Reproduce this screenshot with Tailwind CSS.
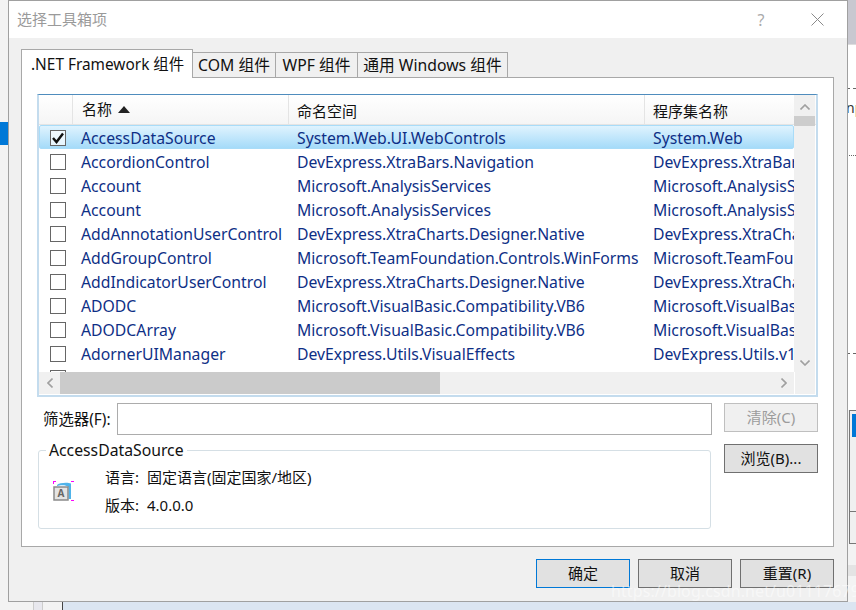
<!DOCTYPE html>
<html lang="zh-CN">
<head>
  <meta charset="UTF-8">
  <title>选择工具箱项</title>
  <script src="https://cdn.jsdelivr.net/npm/@tailwindcss/browser@4"></script>
</head>
<body class="bg-[#f3f3f3] font-['Noto_Sans','Noto_Sans_CJK_SC',sans-serif] text-[15.75px] leading-[24px] text-[#111]">
  <div class="relative w-[856px] h-[610px] overflow-hidden">
    <!-- behind the dialog -->
    <div class="absolute left-0 top-[122px] w-[8px] h-[23px] bg-[#0078d7]"></div>
    <div class="absolute left-[63px] right-0 top-[602px] h-[8px] bg-[#dbe5f1]"></div>
    <div class="absolute left-[62px] top-[602px] w-[1px] h-[8px] bg-[#444]"></div>
    <div class="absolute left-[33px] top-[602px] w-[10px] h-[8px] bg-[#e8e8ee] border-x border-[#ccc]"></div>
    <div class="absolute left-[847px] top-0 w-[9px] h-[44px] bg-[#c8c8d0]"></div>
    <div class="absolute left-[847px] top-[44px] w-[9px] h-[181px] bg-white border-t border-[#ddd] overflow-hidden">
      <div class="mt-[43px] border-t border-dashed border-[#666]"></div>
      <div class="mt-[12px] text-[14px] leading-[14px] text-[#333] -ml-[1px]">np</div>
      <div class="mt-[40px] border-t border-dotted border-[#666]"></div>
    </div>
    <div class="absolute left-[847px] top-[225px] w-[9px] h-[185px] bg-white">
      <div class="mt-[128px] border-t border-dashed border-[#666]"></div>
    </div>
    <div class="absolute left-[849px] top-[410px] w-[7px] h-[134px] bg-[#f0f0f0] border-l border-y border-[#777]">
      <div class="mt-[3px] ml-[2px] h-[23px] bg-[#0078d7]"></div>
      <div class="mt-[74px] border-t border-[#777]"></div>
    </div>
    <div class="absolute left-[847px] top-[565px] w-[9px] h-[11px] bg-[#e4e4e4]"></div>

    <!-- dialog -->
    <div class="absolute left-[8px] top-0 w-[840px] h-[602px] flex flex-col bg-[#f0f0f0] border border-[#a0a0a0]">
      <div class="flex items-center justify-between h-[37px] bg-white shrink-0">
        <div class="pl-[8px] -mt-[2px] text-[15px] text-[#9a9a9a]">选择工具箱项</div>
        <div class="flex items-center">
          <span class="w-[20px] text-center text-[16px] text-[#aaa]">?</span>
          <svg class="ml-[40px] mr-[23px]" width="13" height="13" viewBox="0 0 13 13"><path d="M0.5 0.5L12.5 12.5M12.5 0.5L0.5 12.5" stroke="#8a8a8a" stroke-width="1" fill="none"/></svg>
        </div>
      </div>

      <div class="pl-[12px] pr-[13px] pt-[11px]">
        <!-- tabs -->
        <div class="flex items-end h-[29px] relative z-10">
          <div class="w-[172px] h-[29px] pl-[9px] bg-white border border-b-0 border-[#a8a8a8] text-[15.4px] leading-[30px]">.NET Framework 组件</div>
          <div class="w-[83px] h-[26px] bg-[#f0f0f0] border border-l-0 border-[#a8a8a8] text-center leading-[24px]">COM 组件</div>
          <div class="w-[82px] h-[26px] bg-[#f0f0f0] border border-l-0 border-[#a8a8a8] text-center leading-[24px]">WPF 组件</div>
          <div class="w-[150px] h-[26px] bg-[#f0f0f0] border border-l-0 border-[#a8a8a8] text-center leading-[24px]">通用 Windows 组件</div>
        </div>

        <!-- panel -->
        <div class="-mt-[1px] h-[470px] bg-white border border-[#a8a8a8] px-[16px] pt-[16px]">
          <div class="relative -ml-[1px] w-[781px] h-[303px] overflow-hidden border-2 border-t border-[#c4dcee] border-t-[#4f8cbd]">
            <div class="flex h-[30px] bg-gradient-to-b from-white to-[#f5f5f5] border-b border-[#e4e4e4] text-[15px] leading-[33px]">
              <div class="w-[34px] border-r border-[#e4e4e4]"></div>
              <div class="w-[216px] pl-[9px] flex items-center border-r border-[#e4e4e4]">
                <span>名称</span>
                <svg class="ml-[6px]" width="12" height="7" viewBox="0 0 12 7"><path d="M6 0L12 7H0Z" fill="#222"/></svg>
              </div>
              <div class="w-[356px] pl-[8px] border-r border-[#e4e4e4]">命名空间</div>
              <div class="pl-[8px]">程序集名称</div>
            </div>

            <div class="w-[755px] overflow-hidden text-[#0e2f86] whitespace-nowrap">
              <div class="flex h-[24px] items-center pt-[1px] bg-gradient-to-b from-[#dff3fe] to-[#a5dbf9] border border-[#a9dcf8] rounded-[2px]">
                <span class="w-[10px] shrink-0"></span>
                <span class="flex items-center justify-center w-[16px] h-[16px] border border-[#666] bg-white/70 shrink-0">
                  <svg width="14" height="12" viewBox="0 0 14 12"><path d="M2 6L5.5 10L12 1.5" stroke="#111" stroke-width="2.4" fill="none"/></svg>
                </span>
                <span class="w-[231px] pl-[15px] shrink-0">AccessDataSource</span>
                <span class="w-[356px] shrink-0">System.Web.UI.WebControls</span>
                <span>System.Web</span>
              </div>
              <div class="flex h-[24px] items-center pt-[2px]"><span class="w-[11px] shrink-0"></span><span class="w-[16px] h-[16px] border border-[#666] shrink-0"></span><span class="w-[231px] pl-[15px] shrink-0">AccordionControl</span><span class="w-[356px] shrink-0">DevExpress.XtraBars.Navigation</span><span>DevExpress.XtraBars</span></div>
              <div class="flex h-[24px] items-center pt-[2px]"><span class="w-[11px] shrink-0"></span><span class="w-[16px] h-[16px] border border-[#666] shrink-0"></span><span class="w-[231px] pl-[15px] shrink-0">Account</span><span class="w-[356px] shrink-0">Microsoft.AnalysisServices</span><span>Microsoft.AnalysisServices</span></div>
              <div class="flex h-[24px] items-center pt-[2px]"><span class="w-[11px] shrink-0"></span><span class="w-[16px] h-[16px] border border-[#666] shrink-0"></span><span class="w-[231px] pl-[15px] shrink-0">Account</span><span class="w-[356px] shrink-0">Microsoft.AnalysisServices</span><span>Microsoft.AnalysisServices</span></div>
              <div class="flex h-[24px] items-center pt-[2px]"><span class="w-[11px] shrink-0"></span><span class="w-[16px] h-[16px] border border-[#666] shrink-0"></span><span class="w-[231px] pl-[15px] shrink-0">AddAnnotationUserControl</span><span class="w-[356px] shrink-0">DevExpress.XtraCharts.Designer.Native</span><span>DevExpress.XtraCharts</span></div>
              <div class="flex h-[24px] items-center pt-[2px]"><span class="w-[11px] shrink-0"></span><span class="w-[16px] h-[16px] border border-[#666] shrink-0"></span><span class="w-[231px] pl-[15px] shrink-0">AddGroupControl</span><span class="w-[356px] shrink-0">Microsoft.TeamFoundation.Controls.WinForms</span><span>Microsoft.TeamFoundation</span></div>
              <div class="flex h-[24px] items-center pt-[2px]"><span class="w-[11px] shrink-0"></span><span class="w-[16px] h-[16px] border border-[#666] shrink-0"></span><span class="w-[231px] pl-[15px] shrink-0">AddIndicatorUserControl</span><span class="w-[356px] shrink-0">DevExpress.XtraCharts.Designer.Native</span><span>DevExpress.XtraCharts</span></div>
              <div class="flex h-[24px] items-center pt-[2px]"><span class="w-[11px] shrink-0"></span><span class="w-[16px] h-[16px] border border-[#666] shrink-0"></span><span class="w-[231px] pl-[15px] shrink-0">ADODC</span><span class="w-[356px] shrink-0">Microsoft.VisualBasic.Compatibility.VB6</span><span>Microsoft.VisualBasic</span></div>
              <div class="flex h-[24px] items-center pt-[2px]"><span class="w-[11px] shrink-0"></span><span class="w-[16px] h-[16px] border border-[#666] shrink-0"></span><span class="w-[231px] pl-[15px] shrink-0">ADODCArray</span><span class="w-[356px] shrink-0">Microsoft.VisualBasic.Compatibility.VB6</span><span>Microsoft.VisualBasic</span></div>
              <div class="flex h-[24px] items-center pt-[2px]"><span class="w-[11px] shrink-0"></span><span class="w-[16px] h-[16px] border border-[#666] shrink-0"></span><span class="w-[231px] pl-[15px] shrink-0">AdornerUIManager</span><span class="w-[356px] shrink-0">DevExpress.Utils.VisualEffects</span><span>DevExpress.Utils.v16</span></div>
              <div class="flex h-[24px] items-center pt-[2px]"><span class="w-[11px] shrink-0"></span><span class="w-[16px] h-[16px] border border-[#666] shrink-0"></span><span class="w-[231px] pl-[15px] shrink-0">AdvBandedGridControl</span><span class="w-[356px] shrink-0">DevExpress.XtraGrid.Views</span><span>DevExpress.XtraGrid</span></div>
            </div>

            <!-- vertical scrollbar -->
            <div class="absolute right-[1px] top-0 w-[21px] h-[278px] bg-[#f0f0f0] flex flex-col items-center">
              <svg class="mt-[9px]" width="10" height="6" viewBox="0 0 10 6"><path d="M0.5 5.5L5 1L9.5 5.5" stroke="#a0a0a0" stroke-width="1.6" fill="none"/></svg>
              <div class="mt-[6px] w-full h-[10px] bg-[#cdcdcd]"></div>
              <svg class="mt-[234px]" width="10" height="6" viewBox="0 0 10 6"><path d="M0.5 0.5L5 5L9.5 0.5" stroke="#a0a0a0" stroke-width="1.6" fill="none"/></svg>
            </div>
            <!-- horizontal scrollbar -->
            <div class="absolute left-0 bottom-[1px] w-[776px] h-[22px] bg-[#f0f0f0] flex items-center">
              <div class="w-[21px] flex justify-center"><svg width="6" height="10" viewBox="0 0 6 10"><path d="M5.5 0.5L1 5L5.5 9.5" stroke="#a0a0a0" stroke-width="1.6" fill="none"/></svg></div>
              <div class="w-[380px] h-full bg-[#cbcbcb]"></div>
              <div class="flex-1 flex justify-end pr-[7px]"><svg width="6" height="10" viewBox="0 0 6 10"><path d="M0.5 0.5L5 5L0.5 9.5" stroke="#a0a0a0" stroke-width="1.6" fill="none"/></svg></div>
              <div class="w-[21px] h-full border-l border-white"></div>
            </div>
          </div>

          <div class="flex mt-[6px]">
            <div class="w-[674px]">
              <div class="flex items-center h-[32px]">
                <label class="w-[79px] pl-[5px] pt-[2px] text-[15.4px] whitespace-nowrap">筛选器(F):</label>
                <div class="w-[595px] h-[32px] border border-[#acacac] bg-white"></div>
              </div>
              <div class="relative mt-[15px] w-[673px] h-[79px] border border-[#d5dfe5] rounded-[3px]">
                <span class="absolute left-[7px] -top-[13px] px-[3px] bg-white">AccessDataSource</span>
                <svg class="absolute left-[14px] top-[30px]" width="21" height="21" viewBox="0 0 21 21">
                  <path d="M0 0h3v1H1v2H0zM18 0h3v1h-3zM18 19h3v1h-3z" fill="#f0f"/>
                  <path d="M4 4C6 1.5 15 1 18 2.5V18h-2.5V6C13 3.5 7 4 4 5z" fill="#4fb3ea"/>
                  <rect x="1" y="6" width="14" height="13" fill="#e4e4e4" stroke="#8a8a8a" stroke-width="1.5"/>
                  <text x="8" y="16" text-anchor="middle" font-size="10" font-weight="700" fill="#666">A</text>
                </svg>
                <div class="absolute left-[66px] top-[14px] flex text-[15px]"><span class="w-[42px]">语言:</span><span>固定语言(固定国家/地区)</span></div>
                <div class="absolute left-[66px] top-[42px] flex text-[15px]"><span class="w-[42px]">版本:</span><span>4.0.0.0</span></div>
              </div>
            </div>
            <div class="ml-[12px] flex flex-col gap-[12px]">
              <div class="w-[94px] h-[29px] border border-[#bfbfbf] bg-[#f0f0f0] text-center text-[15px] leading-[26px] text-[#9c9c9c]">清除(C)</div>
              <div class="w-[94px] h-[29px] border border-[#707070] bg-[#e1e1e1] text-center text-[15px] leading-[26px]">浏览(B)...</div>
            </div>
          </div>
        </div>
      </div>

      <div class="flex justify-end gap-[8px] pr-[13px] mt-[12px]">
        <div class="w-[94px] h-[29px] border border-[#0078d7] bg-[#e1e1e1] text-center text-[15px] leading-[26px]">确定</div>
        <div class="w-[94px] h-[29px] border border-[#707070] bg-[#e1e1e1] text-center text-[15px] leading-[26px]">取消</div>
        <div class="w-[94px] h-[29px] border border-[#707070] bg-[#e1e1e1] text-center text-[15px] leading-[26px]">重置(R)</div>
      </div>
    </div>

    <!-- watermark -->
    <div class="absolute left-[611px] top-[579px] text-[16px] tracking-[0.1px] text-white/50 whitespace-nowrap">https://blog.csdn.net/u011176794</div>
  </div>
</body>
</html>
